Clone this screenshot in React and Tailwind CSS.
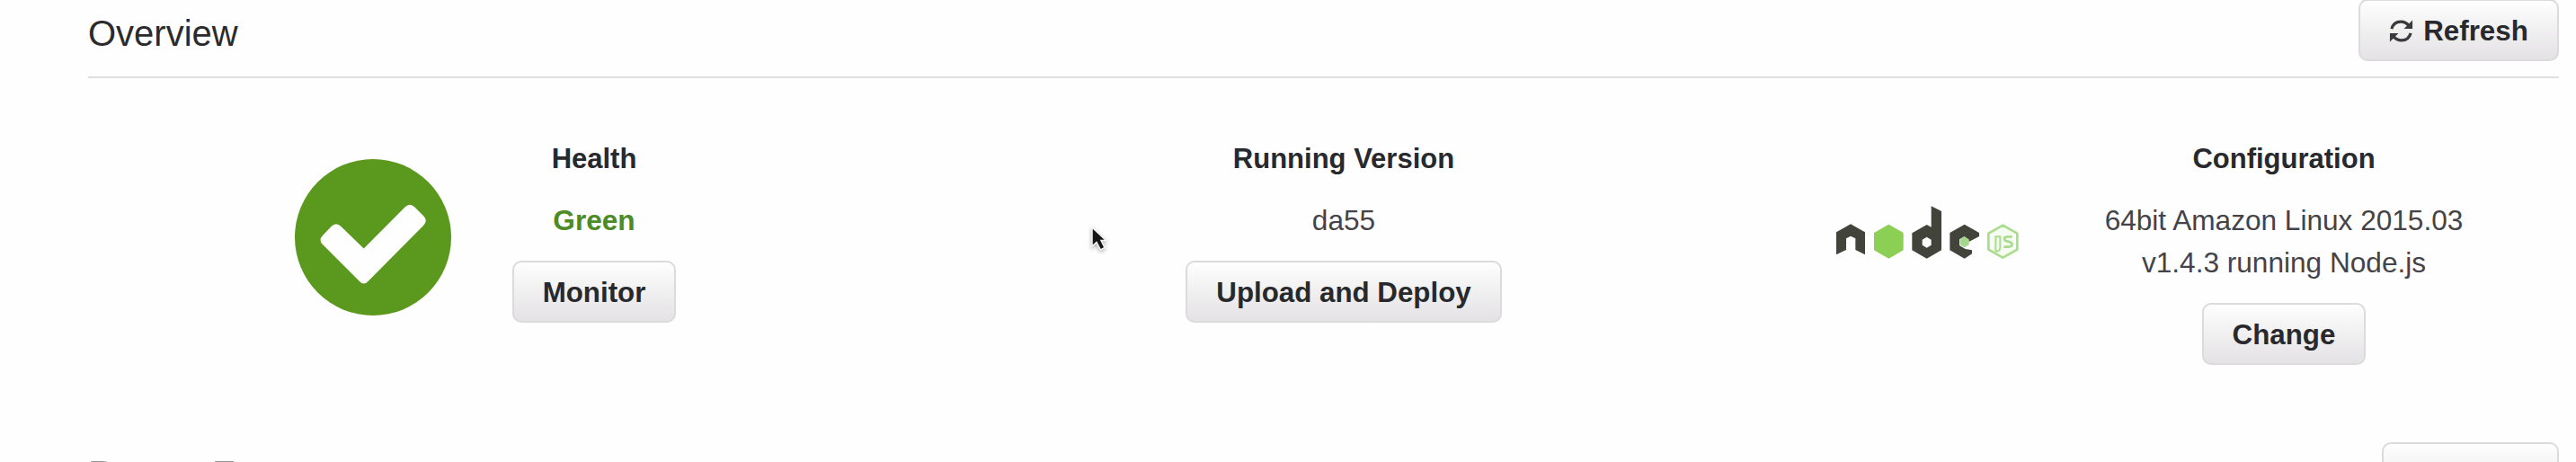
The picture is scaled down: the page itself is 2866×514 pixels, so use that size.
function Button({ className = '', children }) {
  return (
    <button
      className={
        'flex h-[69px] shrink-0 items-center justify-center whitespace-nowrap rounded-[10px] border-2 border-[#dcdadc] bg-linear-to-b from-[#fefefe] to-[#e4e2e4] pt-[2px] text-[31.3px] font-bold leading-[47px] text-[#28292c] ' +
        className
      }
    >
      {children}
    </button>
  );
}

function RefreshIcon() {
  return (
    <svg className="mr-[11px] h-[27px] w-[27px]" viewBox="0 0 28 28" fill="none" stroke="#3a3a3c" strokeWidth="3.4">
      <path d="M3 11.5C4.5 6 8.500 3.200 13.500 3.200c4 0 7 1.600 9.300 4.600" />
      <path d="M25 16.500C23.500 22 19.500 24.800 14.500 24.800c-4 0-7-1.600-9.300-4.600" />
      <path d="M27 1.500v9.800h-9.800z" fill="#3a3a3c" stroke="none" />
      <path d="M1 26.500v-9.800h9.800z" fill="#3a3a3c" stroke="none" />
    </svg>
  );
}

function HealthIcon() {
  return (
    <svg className="mt-[24px] h-[174px] w-[174px] shrink-0" viewBox="0 0 174 174">
      <circle cx="87" cy="87" r="87" fill="#5b981e" />
      <path
        d="M76.700 99.500L122.500 53.500Q128 48 133.500 53.500L143 63Q148.500 68.500 143 74L81.500 136Q76.700 141 72 136L31 95Q26 90 31 85L40.500 75Q46 69.500 51.500 75Z"
        fill="#fefefe"
      />
    </svg>
  );
}

function NodeLogo() {
  return (
    <svg className="mt-[74px] h-[64px] w-[208px] shrink-0" viewBox="60 50 624 192">
      <g fill="#42433b">
        <path d="M117 117L165 144V219L133 203V165L117 157L102 165V203L69 219V144Z" />
        <path
          fillRule="evenodd"
          d="M386 57L420 74V204L371 232L322 204V147L371 119L386 127ZM371 160L356 169V187L371 196L386 187V169Z"
        />
        <path d="M497 118L546 146V158L513 175L497 158L480 168V188L500 200L522 204V216L497 232L448 204V146Z" />
      </g>
      <path d="M244 118L293 146V204L244 232L195 204V146Z" fill="#8bcf55" />
      <path d="M497 159L512 168V186L497 195L482 186V168Z" fill="#a5d78a" />
      <path d="M625 121L673 148V202L625 229L577 202V148Z" fill="#f6fcf2" stroke="#a9dc8d" strokeWidth="8" strokeLinejoin="round" />
      <path d="M598 159H616V196Q616 209 601 207V159" fill="none" stroke="#a9dc8d" strokeWidth="6" />
      <path d="M656 159H640Q630 159 630 166T642 175T656 184T643 193H628" fill="none" stroke="#a9dc8d" strokeWidth="8" />
    </svg>
  );
}

function Cursor() {
  return (
    <svg className="absolute left-[1209px] top-[247px] h-[38px] w-[28px] drop-shadow-[0_2px_2px_rgba(0,0,0,0.3)]" viewBox="0 0 28 38">
      <path d="M6 6V27L11 22.500L15.500 31L20 28.500L16 20.500H21.500Z" fill="#161616" stroke="#f4f4f4" strokeWidth="1.500" />
    </svg>
  );
}

function Status({ className, title, children, action }) {
  return (
    <div className={'flex shrink-0 flex-col items-center text-center text-[31.6px] leading-[47px] text-[#444448] ' + className}>
      <h3 className="text-[31px] font-bold text-[#28292c]">{title}</h3>
      <div className="mb-[21px] mt-[22px] whitespace-nowrap">{children}</div>
      {action}
    </div>
  );
}

function Heading({ title, titleClassName, children }) {
  return (
    <header className="ml-[98px] mr-[19px] flex h-[87px] items-start justify-between border-b-2 border-[#e0dee1]">
      <h2 className={'text-[40px] leading-[46px] text-[#2b2b2d] ' + titleClassName}>{title}</h2>
      {children}
    </header>
  );
}

export default function App() {
  return (
    <main
      className="relative h-[514px] w-[2866px] overflow-hidden bg-[#fefefe]"
      style={{ fontFamily: '"Liberation Sans", Arial, sans-serif' }}
    >
      <Heading title="Overview" titleClassName="pt-[14px]">
        <Button className="-mt-px w-[223px]">
          <RefreshIcon />
          Refresh
        </Button>
      </Heading>
      <section className="flex h-[405px] items-start pl-[328px] pt-[66px]">
        <HealthIcon />
        <Status className="ml-[68px] w-[182px]" title="Health" action={<Button className="w-full">Monitor</Button>}>
          <span className="font-bold text-[#4d8b26]">Green</span>
        </Status>
        <Status className="ml-[567px] w-[352px]" title="Running Version" action={<Button className="w-full">Upload and Deploy</Button>}>
          da55
        </Status>
        <div className="ml-[369px] flex">
          <NodeLogo />
        </div>
        <Status className="ml-[92px] w-[402px]" title="Configuration" action={<Button className="w-[182px]">Change</Button>}>
          64bit Amazon Linux 2015.03
          <br />
          v1.4.3 running Node.js
        </Status>
      </section>
      <Heading title="Recent Events" titleClassName="pt-[12px] opacity-50">
        <Button className="w-[197px]">Show All</Button>
      </Heading>
      <Cursor />
    </main>
  );
}
